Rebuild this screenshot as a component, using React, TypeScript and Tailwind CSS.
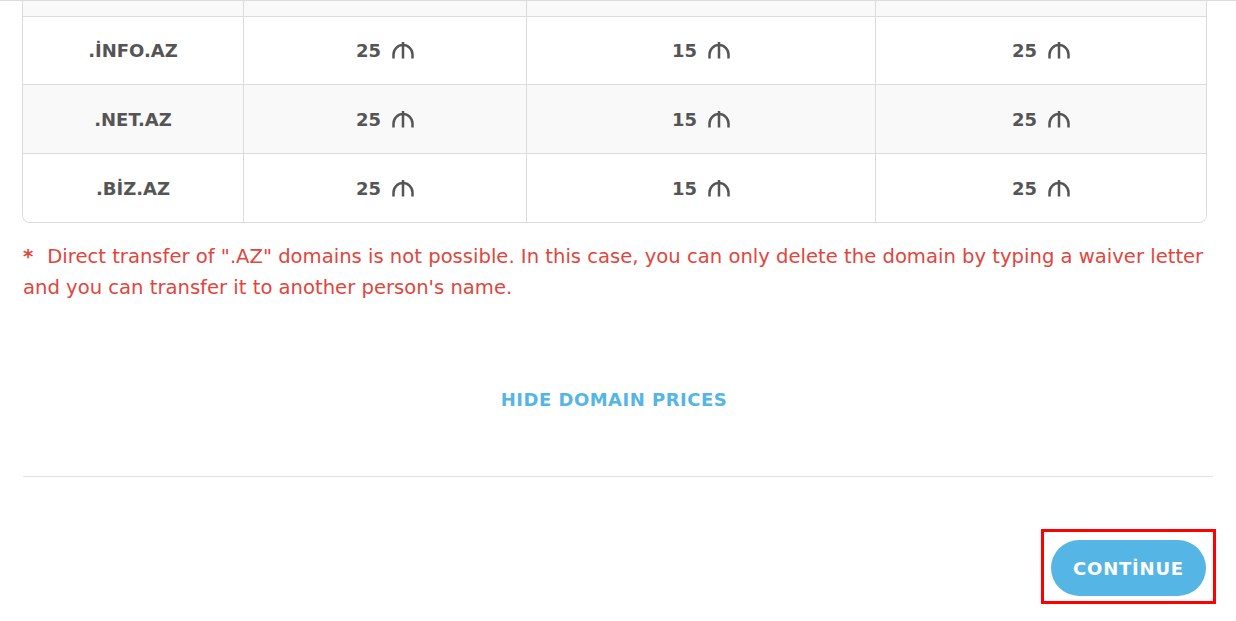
import React from "react";

const rows = [
	{ zone: ".İNFO.AZ", prices: [25, 15, 25], h: "h-[68px]" },
	{ zone: ".NET.AZ", prices: [25, 15, 25], h: "h-[69px]" },
	{ zone: ".BİZ.AZ", prices: [25, 15, 25], h: "h-[68px]" },
];

const cols = "grid grid-cols-[221px_283px_349px_1fr]";

function Manat() {
	return (
		<svg width="22" height="19" viewBox="0 0 22 19" fill="none" className="ml-[11px] shrink-0">
			<path d="M1.5 17.5 V13.5 A9.5 9.5 0 0 1 20.5 13.5 V17.5" stroke="#555" strokeWidth="2.5" />
			<path d="M11 1 V17.5" stroke="#555" strokeWidth="2.5" />
		</svg>
	);
}

function Price({ value }: { value: number }) {
	return (
		<div className="flex items-center justify-center">
			<span>{value}</span>
			<Manat />
		</div>
	);
}

export default function App() {
	return (
		<div
			className="w-[1236px] h-[621px] overflow-hidden bg-white"
			style={{ fontFamily: '"DejaVu Sans", "Open Sans", sans-serif' }}
		>
			<div className="border-t border-[#dcdcdc]">
				<div className="ml-[22px] w-[1185px] border-x border-b border-[#dcdcdc] rounded-b-[8px] overflow-hidden text-[18px] font-bold text-[#555]">
					{/* previous row, scrolled off */}
					<div className={`${cols} h-[16px] bg-[#f9f9f9] border-b border-[#dcdcdc]`}>
						<div className="border-r border-[#dcdcdc]" />
						<div className="border-r border-[#dcdcdc]" />
						<div className="border-r border-[#dcdcdc]" />
						<div />
					</div>
					{rows.map((row, i) => (
						<div
							key={row.zone}
							className={`${cols} ${row.h} ${i % 2 === 1 ? "bg-[#f9f9f9]" : "bg-white"} ${
								i < rows.length - 1 ? "border-b border-[#dcdcdc]" : ""
							}`}
						>
							<div className="flex items-center justify-center border-r border-[#dcdcdc]">{row.zone}</div>
							<div className="flex items-center justify-center border-r border-[#dcdcdc]">
								<Price value={row.prices[0]} />
							</div>
							<div className="flex items-center justify-center border-r border-[#dcdcdc]">
								<Price value={row.prices[1]} />
							</div>
							<div className="flex items-center justify-center">
								<Price value={row.prices[2]} />
							</div>
						</div>
					))}
				</div>
			</div>

			<p className="ml-[23px] mt-[18px] w-[1190px] text-[19.6px] leading-[31px] text-[#e2453c]">
				<span className="font-bold mr-[14px]">*</span>
				<span className="whitespace-nowrap">
					Direct transfer of ".AZ" domains is not possible. In this case, you can only delete the domain by typing a waiver letter
				</span>
				<br />
				and you can transfer it to another person's name.
			</p>

			<div className="mt-[85px] flex justify-center">
				<button className="text-[18px] leading-[24px] font-bold tracking-[0.5px] text-[#55b6e6] ml-[-8px]">
					HIDE DOMAIN PRICES
				</button>
			</div>

			<div className="ml-[23px] mt-[64px] w-[1190px] border-t border-[#e2e2e2]" />

			<div className="flex justify-end pr-[20px] mt-[52px]">
				<div className="border-[3px] border-[#ff0000] px-[7px] pt-[8px] pb-[5px]">
					<button className="h-[56px] w-[155px] rounded-full bg-[#55b6e6] text-white text-[18px] font-bold tracking-[0.8px]">
						CONTİNUE
					</button>
				</div>
			</div>
		</div>
	);
}
